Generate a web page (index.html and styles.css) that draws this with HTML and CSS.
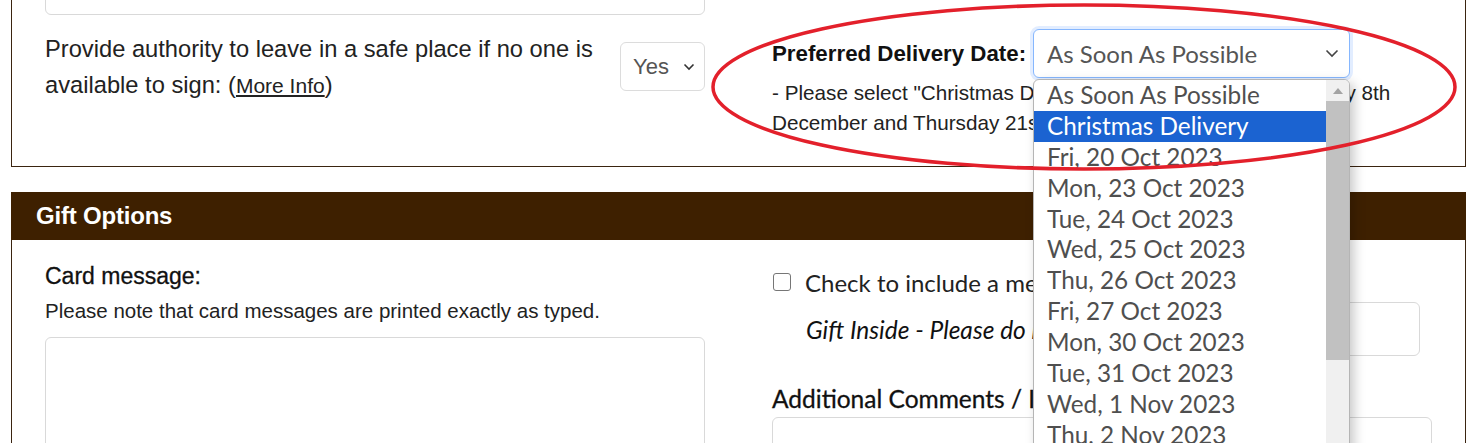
FILE: index.html
```html
<!DOCTYPE html>
<html lang="en">
<head>
<meta charset="utf-8">
<title>Checkout - Delivery &amp; Gift Options</title>
<link rel="stylesheet" href="styles.css">
</head>
<body>
<div class="page">
  <section class="card delivery-card">
    <div class="cols">
      <div class="col">
        <div class="text-input top-input"></div>
        <div class="safe-row">
          <p class="safe-text">Provide authority to leave in a safe place if no one is available to sign: (<a href="#" class="more-link">More Info</a>)</p>
          <div class="select small-select">
            <span class="select-value">Yes</span>
            <svg class="chev" width="12" height="8" viewBox="0 0 12 8"><polyline points="1.5,1.5 6,6 10.5,1.5" fill="none" stroke="#333" stroke-width="1.6"/></svg>
          </div>
        </div>
      </div>
      <div class="col right-col">
        <div class="date-row">
          <span class="date-label">Preferred Delivery Date:</span>
          <div class="date-select-wrap">
            <div class="select date-select">
              <span class="select-value">As Soon As Possible</span>
              <svg class="chev" width="14" height="9" viewBox="0 0 14 9"><polyline points="1.5,1.5 7,7 12.5,1.5" fill="none" stroke="#444" stroke-width="1.6"/></svg>
            </div>
            <div class="dropdown">
              <ul class="options">
                <li>As Soon As Possible</li>
                <li class="active">Christmas Delivery</li>
                <li>Fri, 20 Oct 2023</li>
                <li>Mon, 23 Oct 2023</li>
                <li>Tue, 24 Oct 2023</li>
                <li>Wed, 25 Oct 2023</li>
                <li>Thu, 26 Oct 2023</li>
                <li>Fri, 27 Oct 2023</li>
                <li>Mon, 30 Oct 2023</li>
                <li>Tue, 31 Oct 2023</li>
                <li>Wed, 1 Nov 2023</li>
                <li>Thu, 2 Nov 2023</li>
              </ul>
              <div class="scrollbar">
                <svg class="scroll-up" width="10" height="6" viewBox="0 0 10 6"><polygon points="0,6 5,0 10,6" fill="#a3a3a3"/></svg>
                <div class="thumb"></div>
              </div>
            </div>
          </div>
        </div>
        <p class="help-text">- Please select "Christmas Delivery" for delivery between Friday 8th December and Thursday 21st December.</p>
      </div>
    </div>
  </section>

  <section class="gift">
    <h2 class="gift-title">Gift Options</h2>
    <div class="gift-body cols">
      <div class="col">
        <h3 class="card-label">Card message:</h3>
        <p class="note">Please note that card messages are printed exactly as typed.</p>
        <div class="textarea"></div>
      </div>
      <div class="col right-col gift-right">
        <label class="check-row">
          <span class="checkbox"></span>
          <span class="check-text">Check to include a message on the box saying:</span>
        </label>
        <div class="outside-row">
          <span class="outside-text">Gift Inside - Please do not open until Christmas</span>
          <div class="text-input outside-input"></div>
        </div>
        <h3 class="comments-label">Additional Comments / Instructions:</h3>
        <div class="text-input comments-input"></div>
      </div>
    </div>
  </section>

  <svg class="highlight-ring" width="1473" height="443" viewBox="0 0 1473 443">
    <ellipse cx="1084" cy="87" rx="371" ry="82" fill="none" stroke="#e3202b" stroke-width="3.5"/>
  </svg>
</div>
</body>
</html>
```

FILE: styles.css
```css
* { box-sizing: border-box; }

html, body {
  margin: 0;
  padding: 0;
  background: #fff;
  overflow: hidden;
}

body {
  font-family: "Liberation Sans", Arial, sans-serif;
  color: #222;
}

.page {
  position: relative;
  width: 1473px;
  height: 443px;
  padding: 0 7px 0 11px;
  overflow: hidden;
}

.card {
  border: 1px solid #3a2410;
}

.delivery-card {
  margin-top: -31px;
  padding: 0 33px 28px 33px;
}

.cols {
  display: grid;
  grid-template-columns: 660px 660px;
  column-gap: 67px;
}

.text-input {
  border: 1px solid #d9d9d9;
  border-radius: 6px;
  background: #fff;
}

.top-input {
  height: 45px;
}

.safe-row {
  display: flex;
  align-items: flex-start;
  justify-content: space-between;
  margin-top: 16px;
}

.safe-text {
  margin: 0;
  width: 570px;
  font-size: 23.7px;
  line-height: 36px;
  color: #222;
}

.more-link {
  color: #222;
  text-decoration: underline;
  font-size: 21px;
}

.select {
  display: flex;
  align-items: center;
  justify-content: space-between;
  border: 1px solid #dcdcdc;
  border-radius: 6px;
  background: #fff;
  color: #555;
}

.small-select {
  width: 85px;
  height: 49px;
  margin-top: 11px;
  padding: 0 9px 0 12px;
  font-size: 22px;
}

.right-col {
  position: relative;
}

.date-row {
  display: flex;
  align-items: center;
  margin-top: 59px;
}

.date-label {
  font-weight: bold;
  font-size: 22.3px;
  width: 261px;
  white-space: nowrap;
  color: #111;
}

.date-select-wrap {
  position: relative;
}

.date-select {
  width: 317px;
  height: 49px;
  padding: 0 10px 0 13px;
  border-color: #86b7fe;
  box-shadow: 0 0 0 3px rgba(13, 110, 253, 0.12);
  font-family: Lato, "Open Sans", sans-serif;
  font-size: 24px;
}

.help-text {
  margin: 0;
  width: 655px;
  font-size: 20.7px;
  line-height: 30px;
  color: #222;
}

.dropdown {
  position: absolute;
  top: 50px;
  left: 0;
  width: 317px;
  height: 380px;
  display: flex;
  background: #fff;
  border: 1px solid #b5b5b5;
  border-radius: 6px 6px 0 0;
  box-shadow: 4px 4px 12px rgba(0, 0, 0, 0.22);
  overflow: hidden;
  z-index: 5;
}

.options {
  list-style: none;
  margin: 0;
  padding: 0;
  flex: 1;
  font-family: Lato, "Open Sans", sans-serif;
  font-size: 24.3px;
  color: #4f4f4f;
}

.options li {
  height: 30.9px;
  line-height: 30.9px;
  padding-left: 13px;
  white-space: nowrap;
}

.options li.active {
  background: #1b63d1;
  color: #fff;
}

.scrollbar {
  width: 23px;
  background: #f0f0f0;
  display: flex;
  flex-direction: column;
  align-items: center;
}

.scroll-up {
  margin-top: 8px;
}

.thumb {
  margin-top: 7px;
  width: 23px;
  height: 259px;
  background: #c1c1c1;
}

.gift {
  margin-top: 25px;
}

.gift-title {
  margin: 0;
  height: 48px;
  padding-left: 25px;
  background: #3e2000;
  color: #fff;
  font-size: 24px;
  font-weight: bold;
  line-height: 48px;
  letter-spacing: -0.2px;
}

.gift-body {
  border-left: 1px solid #3a2410;
  border-right: 1px solid #3a2410;
  padding: 21px 33px 0 33px;
  height: 220px;
}

.card-label {
  margin: 0;
  font-size: 23px;
  font-weight: normal;
  line-height: 30px;
  color: #111;
  -webkit-text-stroke: 0.3px #111;
}

.note {
  margin: 8px 0 0;
  font-size: 20.5px;
  line-height: 24px;
  color: #222;
}

.textarea {
  margin-top: 14px;
  height: 160px;
  border: 1px solid #d9d9d9;
  border-radius: 6px;
}

.gift-right {
  font-family: Lato, "Open Sans", sans-serif;
}

.check-row {
  display: flex;
  align-items: center;
  margin-top: 6px;
  height: 30px;
}

.checkbox {
  width: 18px;
  height: 18px;
  margin-left: 1px;
  border: 1.5px solid #767676;
  border-radius: 3px;
  flex: none;
}

.check-text {
  margin-left: 14px;
  font-size: 24px;
  color: #222;
  white-space: nowrap;
}

.outside-row {
  display: flex;
  align-items: center;
  margin-top: 5px;
  padding-left: 34px;
  padding-right: 12px;
}

.outside-text {
  font-style: italic;
  font-size: 24.5px;
  color: #111;
  white-space: nowrap;
}

.outside-input {
  flex: 1;
  height: 54px;
  margin-left: 12px;
}

.comments-label {
  margin: 28px 0 0;
  font-size: 24.5px;
  font-weight: normal;
  line-height: 30px;
  color: #111;
  -webkit-text-stroke: 0.3px #111;
}

.comments-input {
  margin-top: 3px;
  height: 60px;
}

.highlight-ring {
  position: absolute;
  top: 0;
  left: 0;
  pointer-events: none;
  z-index: 10;
}
```
